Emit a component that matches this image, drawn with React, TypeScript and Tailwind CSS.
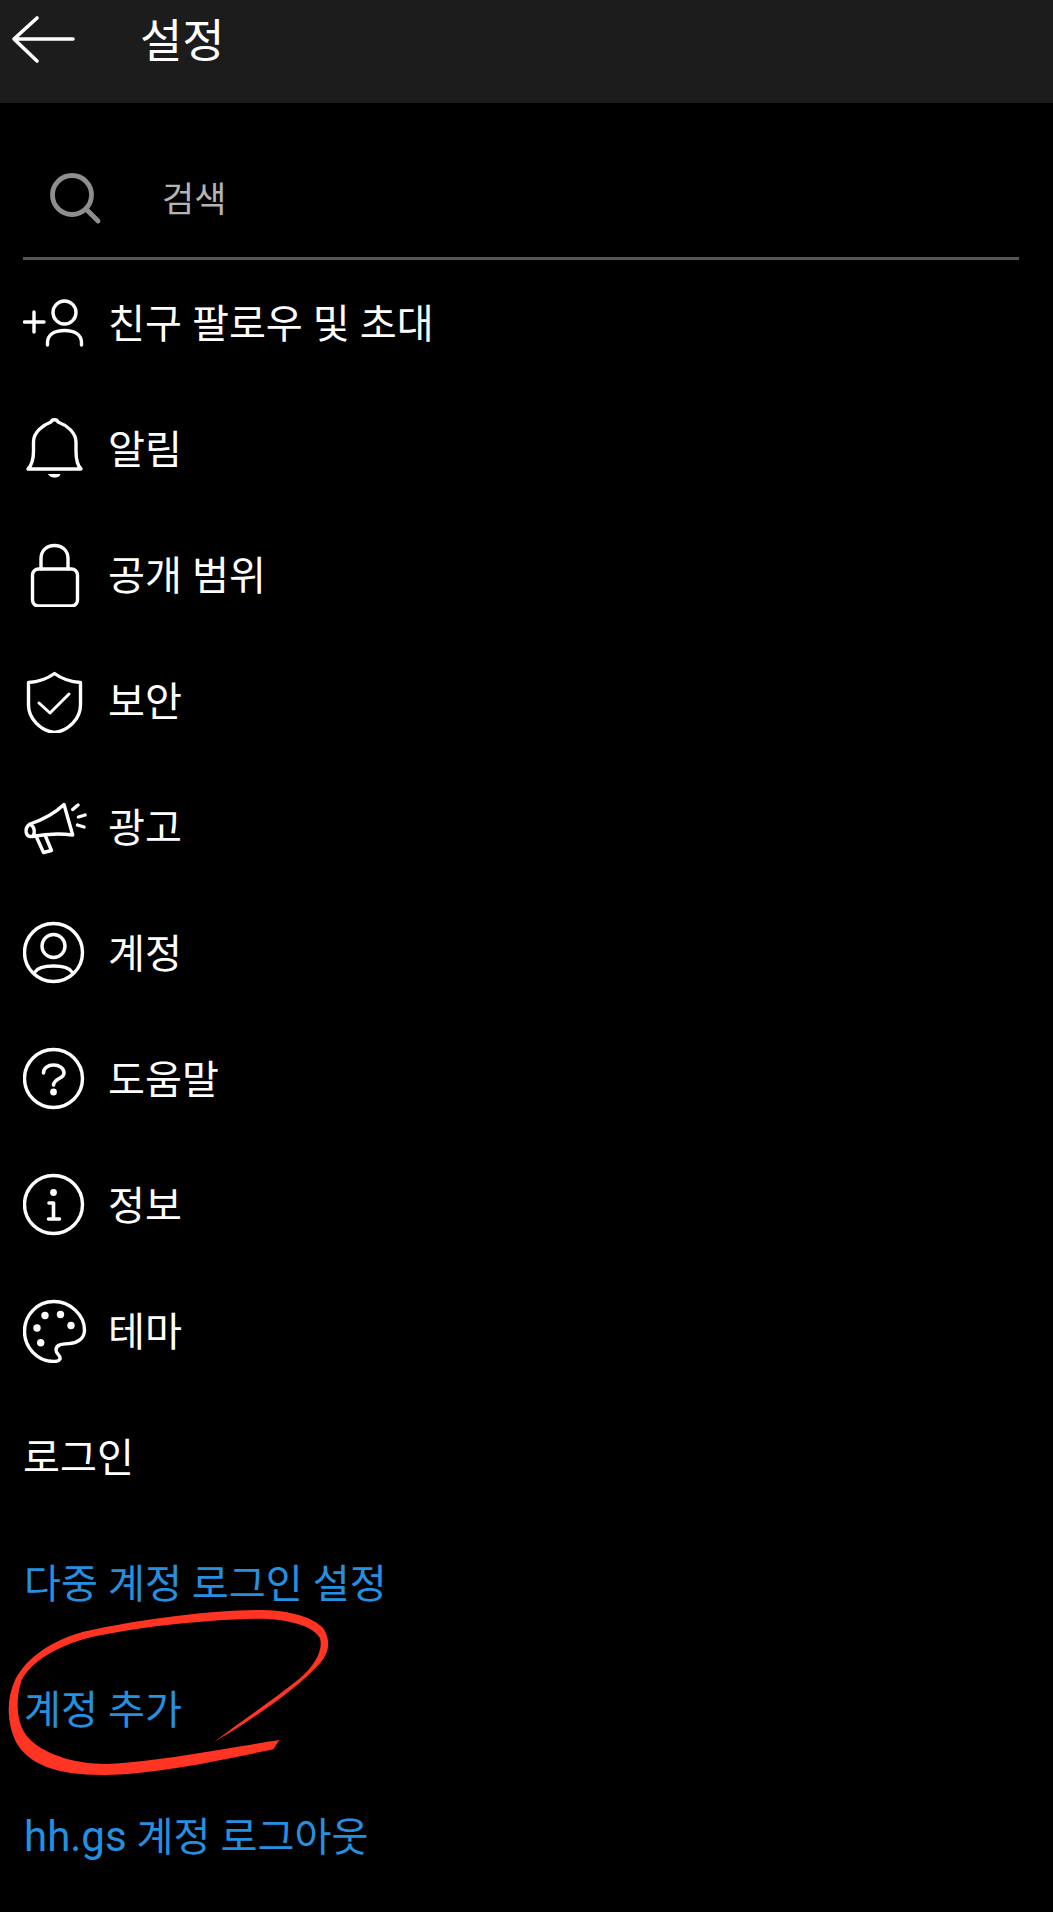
import type { ReactNode } from "react";

const s = { fill: "none", stroke: "white", strokeWidth: 3.4, strokeLinecap: "round" as const, strokeLinejoin: "round" as const };

function Ico({ children }: { children: ReactNode }) {
  return (
    <svg width="64" height="64" viewBox="0 0 64 64" className="shrink-0" {...s}>
      {children}
    </svg>
  );
}

const FriendIcon = (
  <Ico>
    <path d="M1.5 31H21M11 21V41" />
    <circle cx="41.5" cy="21.5" r="11.5" />
    <path d="M24.5 54V52C24.5 44 31 39.5 41.5 39.5S58.5 44 58.5 52V54" />
  </Ico>
);
const BellIcon = (
  <Ico>
    <path d="M5 52H58C54 48 53 42 53 34V25C53 15 43 8 35 5C34 2 29 2 28 5C20 8 10.5 15 10.5 25V34C10.5 42 9 48 5 52Z" />
    <path d="M26 57.5H37C36 61 27 61 26 57.5Z" fill="white" strokeWidth="1" />
  </Ico>
);
const LockIcon = (
  <Ico>
    <rect x="9.5" y="26" width="45" height="37" rx="6" />
    <path d="M18 26V16C18 7 24 2.5 31.5 2.5S45 7 45 16V26" />
  </Ico>
);
const ShieldIcon = (
  <Ico>
    <path d="M31.5 4.5C24 10 14 13 5.5 13.5V36C5.5 50 18 62 31.5 63.5C45 62 57.5 50 57.5 36V13.5C49 13 39 10 31.5 4.5Z" />
    <path d="M16 34L27 44L46 25" strokeWidth="3" />
  </Ico>
);
const AdsIcon = (
  <Ico>
    <path d="M41 9.5L49.7 40C36 38 22 39 9 41.5C2 42 1 33 7 29C19 25 31 19 41 9.5Z" />
    <path d="M7.5 29.5C12 32 12 38 10 41" />
    <path d="M13 41L20.5 57.5L28.5 55.5L22 40" />
    <path d="M49.7 14.5L55 10M55.5 22L62 20M54.5 30L61 32" />
  </Ico>
);
const AccountIcon = (
  <Ico>
    <circle cx="30.5" cy="31.5" r="29" />
    <circle cx="30.5" cy="25" r="11.5" />
    <path d="M12 51C15 46 22 45 30.5 45S46 46 49 51" />
  </Ico>
);
const HelpIcon = (
  <Ico>
    <circle cx="30.5" cy="31.5" r="29" />
    <path d="M20.5 26C20.5 21 25 18 30.5 18C36 18 41 21 41 26C41 32 31 31 30.5 38" strokeWidth="3.6" />
    <circle cx="30.5" cy="45" r="3.4" fill="white" stroke="none" />
  </Ico>
);
const InfoIcon = (
  <Ico>
    <circle cx="30.5" cy="31.5" r="29" />
    <circle cx="30.5" cy="19.5" r="3.4" fill="white" stroke="none" />
    <path d="M26 30H30.5V46M25.5 46H36.5" strokeWidth="3.6" />
  </Ico>
);
const ThemeIcon = (
  <Ico>
    <path d="M31 2.5C47 2.5 61.5 16 61.5 31C61.5 40 54 44 47 44.5C40 45 33 45 33 51C33 55 38 56 37 60C36 62 33 62.5 31 62.5C14 62.5 1.5 48 1.5 32.5C1.5 16 14 2.5 31 2.5Z" />
    <g fill="white" stroke="none">
      <circle cx="22" cy="16.5" r="3.7" />
      <circle cx="37.5" cy="15.5" r="3.7" />
      <circle cx="48" cy="26.5" r="3.7" />
      <circle cx="14" cy="29" r="3.7" />
      <circle cx="17.7" cy="43.7" r="3.7" />
    </g>
  </Ico>
);

const rows = [
  { icon: FriendIcon, label: "친구 팔로우 및 초대" },
  { icon: BellIcon, label: "알림" },
  { icon: LockIcon, label: "공개 범위" },
  { icon: ShieldIcon, label: "보안" },
  { icon: AdsIcon, label: "광고" },
  { icon: AccountIcon, label: "계정" },
  { icon: HelpIcon, label: "도움말" },
  { icon: InfoIcon, label: "정보" },
  { icon: ThemeIcon, label: "테마" },
];

export default function App() {
  const linkRow = "flex h-[126px] items-center pl-[24px] pt-[4px] text-[40.2px] text-[#2590e0]";
  return (
    <div className="relative min-h-[1912px] overflow-hidden bg-black font-['Roboto','Noto_Sans_CJK_KR',sans-serif] text-white">
      <div className="flex h-[103px] bg-[#1c1c1c]">
        <svg width="80" height="78" viewBox="0 0 80 78" fill="none" stroke="white" strokeWidth="3.6" strokeLinecap="round" strokeLinejoin="round">
          <path d="M14 39H73M37 18L14 39L37 61" />
        </svg>
        <h1 className="ml-[60px] h-[82px] text-[46px] leading-[82px]">설정</h1>
      </div>

      <div className="ml-[23px] mr-[34px] flex h-[157px] items-center border-b-[3px] border-[#555555] pt-[34px]">
        <svg width="80" height="60" viewBox="0 0 80 60" fill="none" stroke="#8e8e8e" strokeWidth="4.8" strokeLinecap="round">
          <circle cx="49" cy="28" r="19.5" />
          <path d="M63 42L75 54" />
        </svg>
        <span className="ml-[59px] pt-[9px] text-[35px] text-[#b4b4b4]">검색</span>
      </div>

      {rows.map((r) => (
        <div key={r.label} className="flex h-[126px] items-center pl-[23px]">
          <span className="flex w-[85px] shrink-0">{r.icon}</span>
          <span className="pt-[4px] text-[40.2px]">{r.label}</span>
        </div>
      ))}

      <div className="flex h-[126px] items-center pl-[23px] pt-[4px] text-[40.2px]">로그인</div>
      <div className={linkRow}>다중 계정 로그인 설정</div>
      <div className={linkRow}>계정 추가</div>
      <div className={linkRow}>
        <span className="whitespace-pre">
          <span className="text-[42px]">hh.gs</span> 계정 로그아웃
        </span>
      </div>

      <svg className="absolute left-0 top-[1540px]" width="400" height="372" viewBox="0 0 1200 1116">
        <path
          fill="#ff3422"
          d="M640 608C720 560 880 460 960 370C990 335 992 300 970 265C940 232 870 212 790 210C650 210 450 232 250 275C160 300 80 350 45 420C18 480 20 550 50 610C90 675 170 707 320 705C480 700 640 665 820 628L838 600C700 620 500 662 320 672C220 672 120 640 78 585C50 545 45 480 65 420C95 365 170 320 260 295C400 262 620 238 790 236C880 240 945 262 960 295C970 330 945 375 900 415C820 480 720 545 640 608Z"
        />
      </svg>
    </div>
  );
}
